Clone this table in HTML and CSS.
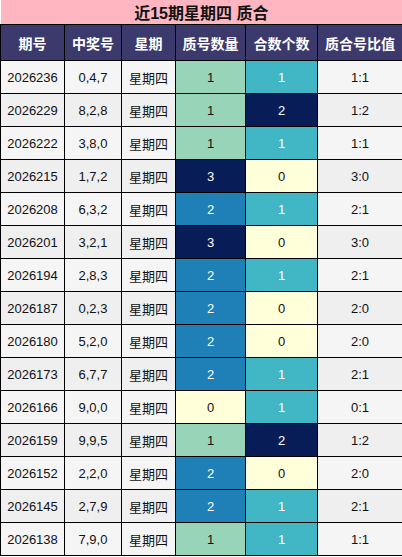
FILE: index.html
```html
<!DOCTYPE html>
<html lang="zh">
<head>
<meta charset="utf-8">
<link rel="stylesheet" href="styles.css">
</head>
<body>
<table class="tbl">
<colgroup>
<col class="c1"><col class="c2"><col class="c3"><col class="c4"><col class="c5"><col class="c6">
</colgroup>
<thead>
<tr class="title-row"><th colspan="6">近15期星期四 质合</th></tr>
<tr class="head-row"><th>期号</th><th>中奖号</th><th>星期</th><th>质号数量</th><th>合数个数</th><th>质合号比值</th></tr>
</thead>
<tbody>
<tr class="odd"><td>2026236</td><td>0,4,7</td><td>星期四</td><td class="g">1</td><td class="t">1</td><td>1:1</td></tr>
<tr class="even"><td>2026229</td><td>8,2,8</td><td>星期四</td><td class="g">1</td><td class="n">2</td><td>1:2</td></tr>
<tr class="odd"><td>2026222</td><td>3,8,0</td><td>星期四</td><td class="g">1</td><td class="t">1</td><td>1:1</td></tr>
<tr class="even"><td>2026215</td><td>1,7,2</td><td>星期四</td><td class="n">3</td><td class="y">0</td><td>3:0</td></tr>
<tr class="odd"><td>2026208</td><td>6,3,2</td><td>星期四</td><td class="b">2</td><td class="t">1</td><td>2:1</td></tr>
<tr class="even"><td>2026201</td><td>3,2,1</td><td>星期四</td><td class="n">3</td><td class="y">0</td><td>3:0</td></tr>
<tr class="odd"><td>2026194</td><td>2,8,3</td><td>星期四</td><td class="b">2</td><td class="t">1</td><td>2:1</td></tr>
<tr class="even"><td>2026187</td><td>0,2,3</td><td>星期四</td><td class="b">2</td><td class="y">0</td><td>2:0</td></tr>
<tr class="odd"><td>2026180</td><td>5,2,0</td><td>星期四</td><td class="b">2</td><td class="y">0</td><td>2:0</td></tr>
<tr class="even"><td>2026173</td><td>6,7,7</td><td>星期四</td><td class="b">2</td><td class="t">1</td><td>2:1</td></tr>
<tr class="odd"><td>2026166</td><td>9,0,0</td><td>星期四</td><td class="y">0</td><td class="t">1</td><td>0:1</td></tr>
<tr class="even"><td>2026159</td><td>9,9,5</td><td>星期四</td><td class="g">1</td><td class="n">2</td><td>1:2</td></tr>
<tr class="odd"><td>2026152</td><td>2,2,0</td><td>星期四</td><td class="b">2</td><td class="y">0</td><td>2:0</td></tr>
<tr class="even"><td>2026145</td><td>2,7,9</td><td>星期四</td><td class="b">2</td><td class="t">1</td><td>2:1</td></tr>
<tr class="odd"><td>2026138</td><td>7,9,0</td><td>星期四</td><td class="g">1</td><td class="t">1</td><td>1:1</td></tr>
</tbody>
</table>
</body>
</html>
```

FILE: styles.css
```css
html, body {
  margin: 0;
  padding: 0;
  background: #ffffff;
}
body {
  font-family: "Liberation Sans", "Noto Sans CJK SC", sans-serif;
  color: #111;
}
.tbl {
  border-collapse: collapse;
  table-layout: fixed;
  width: 402px;
}
.c1 { width: 64px; }
.c2 { width: 57px; }
.c3 { width: 54px; }
.c4 { width: 70px; }
.c5 { width: 72px; }
.c6 { width: 85px; }
.tbl th, .tbl td {
  border: 1px solid #000;
  text-align: center;
  padding: 0;
  overflow: hidden;
  white-space: nowrap;
}
.title-row th {
  background: #ffb6c1;
  height: 24px;
  font-size: 16px;
  font-weight: bold;
  color: #111;
  border-top: none;
  border-left: none;
}
.head-row th {
  background: #3c3a6c;
  color: #ffffff;
  height: 35px;
  font-size: 14px;
  font-weight: bold;
}
.tbl td {
  height: 32px;
  font-size: 13px;
}
.odd td { background: #f5f5f5; }
.even td { background: #efefef; }
.odd td.g, .even td.g { background: #98d5b8; color: #111; }
.odd td.t, .even td.t { background: #41b6c4; color: #ffffff; }
.odd td.n, .even td.n { background: #081d58; color: #ffffff; }
.odd td.b, .even td.b { background: #1f80b8; color: #ffffff; }
.odd td.y, .even td.y { background: #ffffd9; color: #111; }
```
